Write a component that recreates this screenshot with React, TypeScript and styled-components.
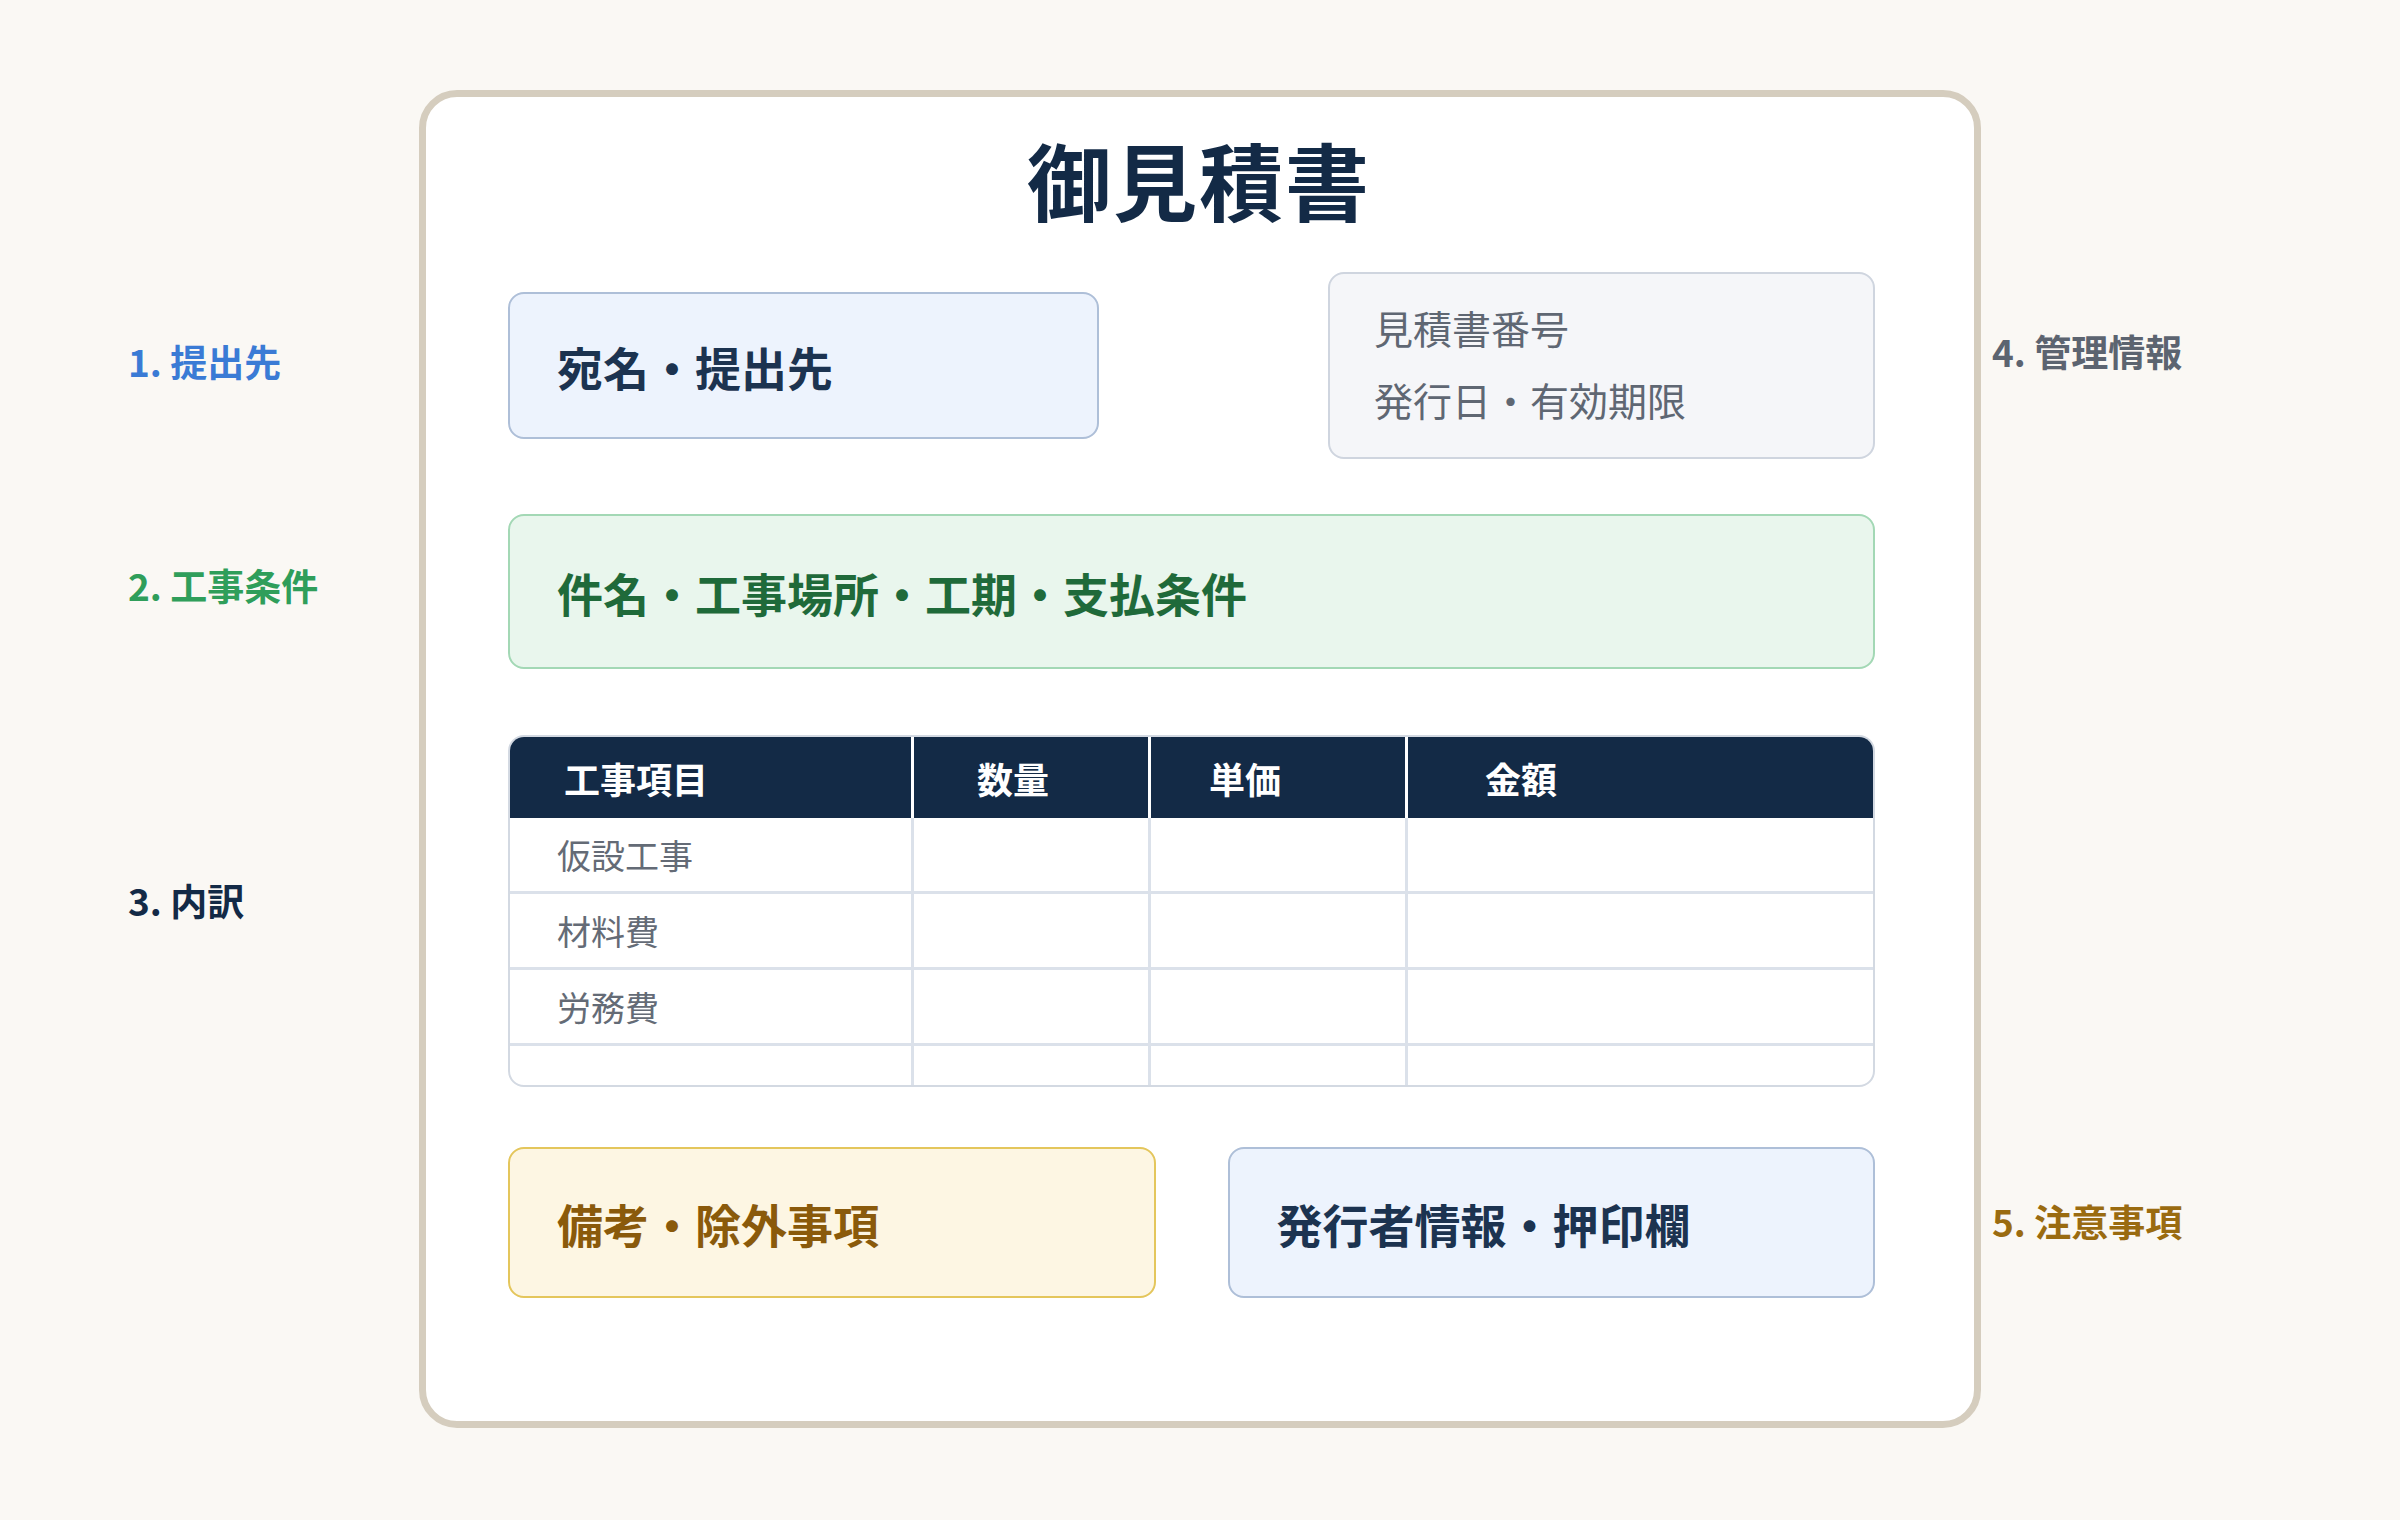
import React from "react";
import styled, { createGlobalStyle } from "styled-components";

const Global = createGlobalStyle`
  html, body { margin: 0; padding: 0; background: #faf8f4; }
  body { font-family: "Noto Sans CJK JP", "Noto Sans", sans-serif; }
`;

const Page = styled.div`
  position: relative;
  width: 2400px;
  height: 1520px;
  padding: 90px 0 0 419px;
  box-sizing: border-box;
`;

const Card = styled.div`
  width: 1562px;
  height: 1338px;
  box-sizing: border-box;
  border: 7px solid #d5cdbe;
  border-radius: 38px;
  background: #ffffff;
  padding: 32px 99px 0 82px;
  display: flex;
  flex-direction: column;
`;

const Title = styled.h1`
  margin: 0;
  text-align: center;
  font-size: 84px;
  line-height: 100px;
  font-weight: 700;
  color: #132a46;
  letter-spacing: 2px;
  padding-left: 15px;
`;

const Row = styled.div<{ $mt: number; $gap?: number }>`
  display: flex;
  justify-content: space-between;
  align-items: center;
  margin-top: ${(p) => p.$mt}px;
  gap: ${(p) => p.$gap ?? 0}px;
`;

const Box = styled.div<{ $w?: number; $h: number; $bg: string; $bd: string; $fg: string }>`
  box-sizing: border-box;
  width: ${(p) => (p.$w ? `${p.$w}px` : "100%")};
  height: ${(p) => p.$h}px;
  background: ${(p) => p.$bg};
  border: 2px solid ${(p) => p.$bd};
  border-radius: 16px;
  display: flex;
  align-items: center;
  padding-left: 47px;
  font-size: 46px;
  font-weight: 700;
  color: ${(p) => p.$fg};
`;

const Meta = styled.div`
  box-sizing: border-box;
  width: 547px;
  height: 187px;
  background: #f5f6f9;
  border: 2px solid #cfd5df;
  border-radius: 16px;
  padding: 28px 0 0 44px;
  display: flex;
  flex-direction: column;
  gap: 22px;
  font-size: 39px;
  line-height: 50px;
  color: #5f6773;
`;

const Table = styled.div`
  margin-top: 66px;
  border: 2px solid #d3d9e2;
  border-radius: 16px;
  overflow: hidden;
  display: grid;
  grid-template-columns: 404px 237px 257px 1fr;
  grid-template-rows: 81px 76px 76px 76px 39px;
`;

const Head = styled.div<{ $pl: number; $last?: boolean }>`
  background: #132a46;
  color: #fff;
  font-size: 36px;
  font-weight: 700;
  display: flex;
  align-items: center;
  padding-left: ${(p) => p.$pl}px;
  border-right: ${(p) => (p.$last ? "none" : "3px solid #ffffff")};
`;

const Cell = styled.div<{ $last?: boolean; $bottom?: boolean }>`
  display: flex;
  align-items: center;
  padding-left: 47px;
  font-size: 34px;
  color: #646b76;
  border-right: ${(p) => (p.$last ? "none" : "3px solid #dbe1ea")};
  border-bottom: ${(p) => (p.$bottom ? "none" : "3px solid #dbe1ea")};
`;

const Note = styled.div<{ $top: number; $left: number; $c: string }>`
  position: absolute;
  top: ${(p) => p.$top}px;
  left: ${(p) => p.$left}px;
  font-size: 37px;
  font-weight: 700;
  color: ${(p) => p.$c};
  line-height: 50px;
  transform: translateY(-50%);
`;

const rows = ["仮設工事", "材料費", "労務費", ""];

export default function App() {
  return (
    <Page>
      <Global />
      <Note $top={361} $left={128} $c="#3a7bd5">1. 提出先</Note>
      <Note $top={585} $left={128} $c="#2f9e5a">2. 工事条件</Note>
      <Note $top={900} $left={128} $c="#132a46">3. 内訳</Note>
      <Note $top={351} $left={1992} $c="#5c6470">4. 管理情報</Note>
      <Note $top={1221} $left={1992} $c="#9a6b10">5. 注意事項</Note>
      <Card>
        <Title>御見積書</Title>
        <Row $mt={43}>
          <Box $w={591} $h={147} $bg="#edf3fd" $bd="#aebfd8" $fg="#1c3350">宛名・提出先</Box>
          <Meta>
            <div>見積書番号</div>
            <div>発行日・有効期限</div>
          </Meta>
        </Row>
        <Row $mt={55}>
          <Box $h={155} $bg="#e9f6ed" $bd="#a3d8b5" $fg="#1f6a3a">件名・工事場所・工期・支払条件</Box>
        </Row>
        <Table>
          <Head $pl={54}>工事項目</Head>
          <Head $pl={63}>数量</Head>
          <Head $pl={58}>単価</Head>
          <Head $pl={77} $last>金額</Head>
          {rows.map((r, i) => (
            <React.Fragment key={i}>
              <Cell $bottom={i === 3}>{r}</Cell>
              <Cell $bottom={i === 3} />
              <Cell $bottom={i === 3} />
              <Cell $bottom={i === 3} $last />
            </React.Fragment>
          ))}
        </Table>
        <Row $mt={60} $gap={72}>
          <Box $h={151} $bg="#fdf6e3" $bd="#e4c65c" $fg="#8a5a0b">備考・除外事項</Box>
          <Box $h={151} $bg="#edf3fd" $bd="#aebfd8" $fg="#1c3350">発行者情報・押印欄</Box>
        </Row>
      </Card>
    </Page>
  );
}
